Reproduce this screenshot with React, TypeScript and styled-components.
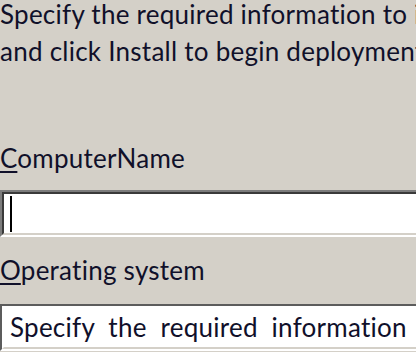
import styled, { createGlobalStyle } from "styled-components";

const GlobalStyle = createGlobalStyle`
  html, body {
    margin: 0;
    padding: 0;
    background: #d4d0c8;
    overflow: hidden;
  }
`;

const S_Page = styled.div`
  width: 640px;
  height: 352px;
  overflow: hidden;
  background: #d4d0c8;
  color: #10102a;
  font-family: Lato, "Open Sans", sans-serif;
  font-size: 26px;
  line-height: 37px;
  letter-spacing: 0.25px;
  font-variant-ligatures: none;
`;

const S_Intro = styled.p`
  margin: -4px 0 0;
  white-space: nowrap;
`;

const S_Label = styled.label<{ $gap: number }>`
  display: block;
  margin-top: ${(p) => p.$gap}px;
  white-space: nowrap;
`;

const S_Key = styled.span`
  text-decoration: underline;
  text-decoration-thickness: 2px;
  text-underline-offset: 3px;
`;

const S_Field = styled.div<{ $focused?: boolean; $gap: number }>`
  margin-top: ${(p) => p.$gap}px;
  border-style: solid;
  border-width: 2px;
  border-color: ${(p) => (p.$focused ? "#7c7c7c" : "#5c5c5c")} #fff #fff
    ${(p) => (p.$focused ? "#7c7c7c" : "#5c5c5c")};
`;

const S_FieldInner = styled.div<{ $focused?: boolean }>`
  height: 39px;
  background: #fff;
  border-style: solid;
  border-width: 2px;
  border-color: ${(p) => (p.$focused ? "#3a3a3a" : "#fff")} #d4d0c8 #d4d0c8
    ${(p) => (p.$focused ? "#3a3a3a" : "#fff")};
  display: flex;
  align-items: center;
  padding-left: 6px;
  white-space: nowrap;
`;

const S_Caret = styled.span`
  display: block;
  width: 2px;
  height: 36px;
  background: #000;
`;

const S_Value = styled.span`
  word-spacing: 7px;
  line-height: 39px;
  color: #10102a;
`;

const App = () => {
  return (
    <S_Page>
      <GlobalStyle />
      <S_Intro>
        Specify the required information to install the selected software
        <br />
        and click Install to begin deployment of the operating system.
      </S_Intro>
      <S_Label $gap={70}>
        <S_Key>C</S_Key>omputerName
      </S_Label>
      <S_Field $focused $gap={13}>
        <S_FieldInner $focused>
          <S_Caret />
        </S_FieldInner>
      </S_Field>
      <S_Label $gap={15}>
        <S_Key>O</S_Key>perating system
      </S_Label>
      <S_Field $gap={15}>
        <S_FieldInner>
          <S_Value>Specify the required information about the system</S_Value>
        </S_FieldInner>
      </S_Field>
    </S_Page>
  );
};

export default App;
